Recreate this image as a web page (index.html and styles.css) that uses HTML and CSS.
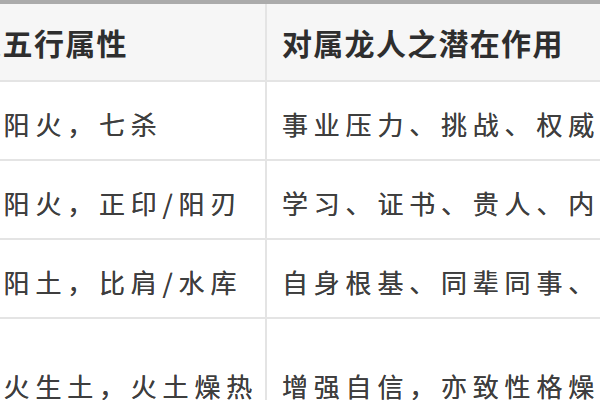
FILE: index.html
```html
<!DOCTYPE html>
<html lang="zh">
<head>
<meta charset="utf-8">
<title>五行属性</title>
<link rel="stylesheet" href="styles.css">
</head>
<body>
<div class="page">
  <table class="grid">
    <thead>
      <tr>
        <th class="c1">地支五行属性</th>
        <th class="c2">对属龙人之潜在作用</th>
      </tr>
    </thead>
    <tbody>
      <tr>
        <td class="c1">午属阳火，七杀</td>
        <td class="c2">事业压力、挑战、权威与管理能力</td>
      </tr>
      <tr>
        <td class="c1">巳属阳火，正印/阳刃</td>
        <td class="c2">学习、证书、贵人、内心修养</td>
      </tr>
      <tr>
        <td class="c1">辰属阳土，比肩/水库</td>
        <td class="c2">自身根基、同辈同事、竞争合作</td>
      </tr>
      <tr class="tall">
        <td class="c1">流年火生土，火土燥热</td>
        <td class="c2">增强自信，亦致性格燥急冲动</td>
      </tr>
    </tbody>
  </table>
</div>
</body>
</html>
```
FILE: styles.css
```css
html, body {
  margin: 0;
  padding: 0;
  background: #ffffff;
  overflow: hidden;
  width: 600px;
  height: 400px;
}

.page {
  border-top: 4px solid #ababab;
  margin-left: -75px;
  width: 1100px;
}

.grid {
  border-collapse: collapse;
  font-family: "Noto Sans CJK SC", "Noto Sans", sans-serif;
  table-layout: fixed;
  width: 1100px;
}

.grid th,
.grid td {
  padding: 0 15px;
  text-align: left;
  white-space: nowrap;
  overflow: hidden;
  border-bottom: 2px solid #e4e4e4;
}

.c1 {
  width: 310px;
  border-right: 2px solid #e4e4e4;
}

.grid th {
  height: 76px;
  background: #f6f6f6;
  color: #2e2e2e;
  font-size: 30px;
  font-weight: 600;
  letter-spacing: 1.3px;
  vertical-align: middle;
}

.grid td {
  height: 71px;
  padding-top: 6px;
  color: #3e3e3e;
  font-size: 26px;
  letter-spacing: 5.8px;
  vertical-align: middle;
  text-shadow: 0 0 0.6px #555555;
}

.grid .tall td {
  height: 160px;
  vertical-align: top;
  padding-top: 47px;
  line-height: 1.5;
}
```
